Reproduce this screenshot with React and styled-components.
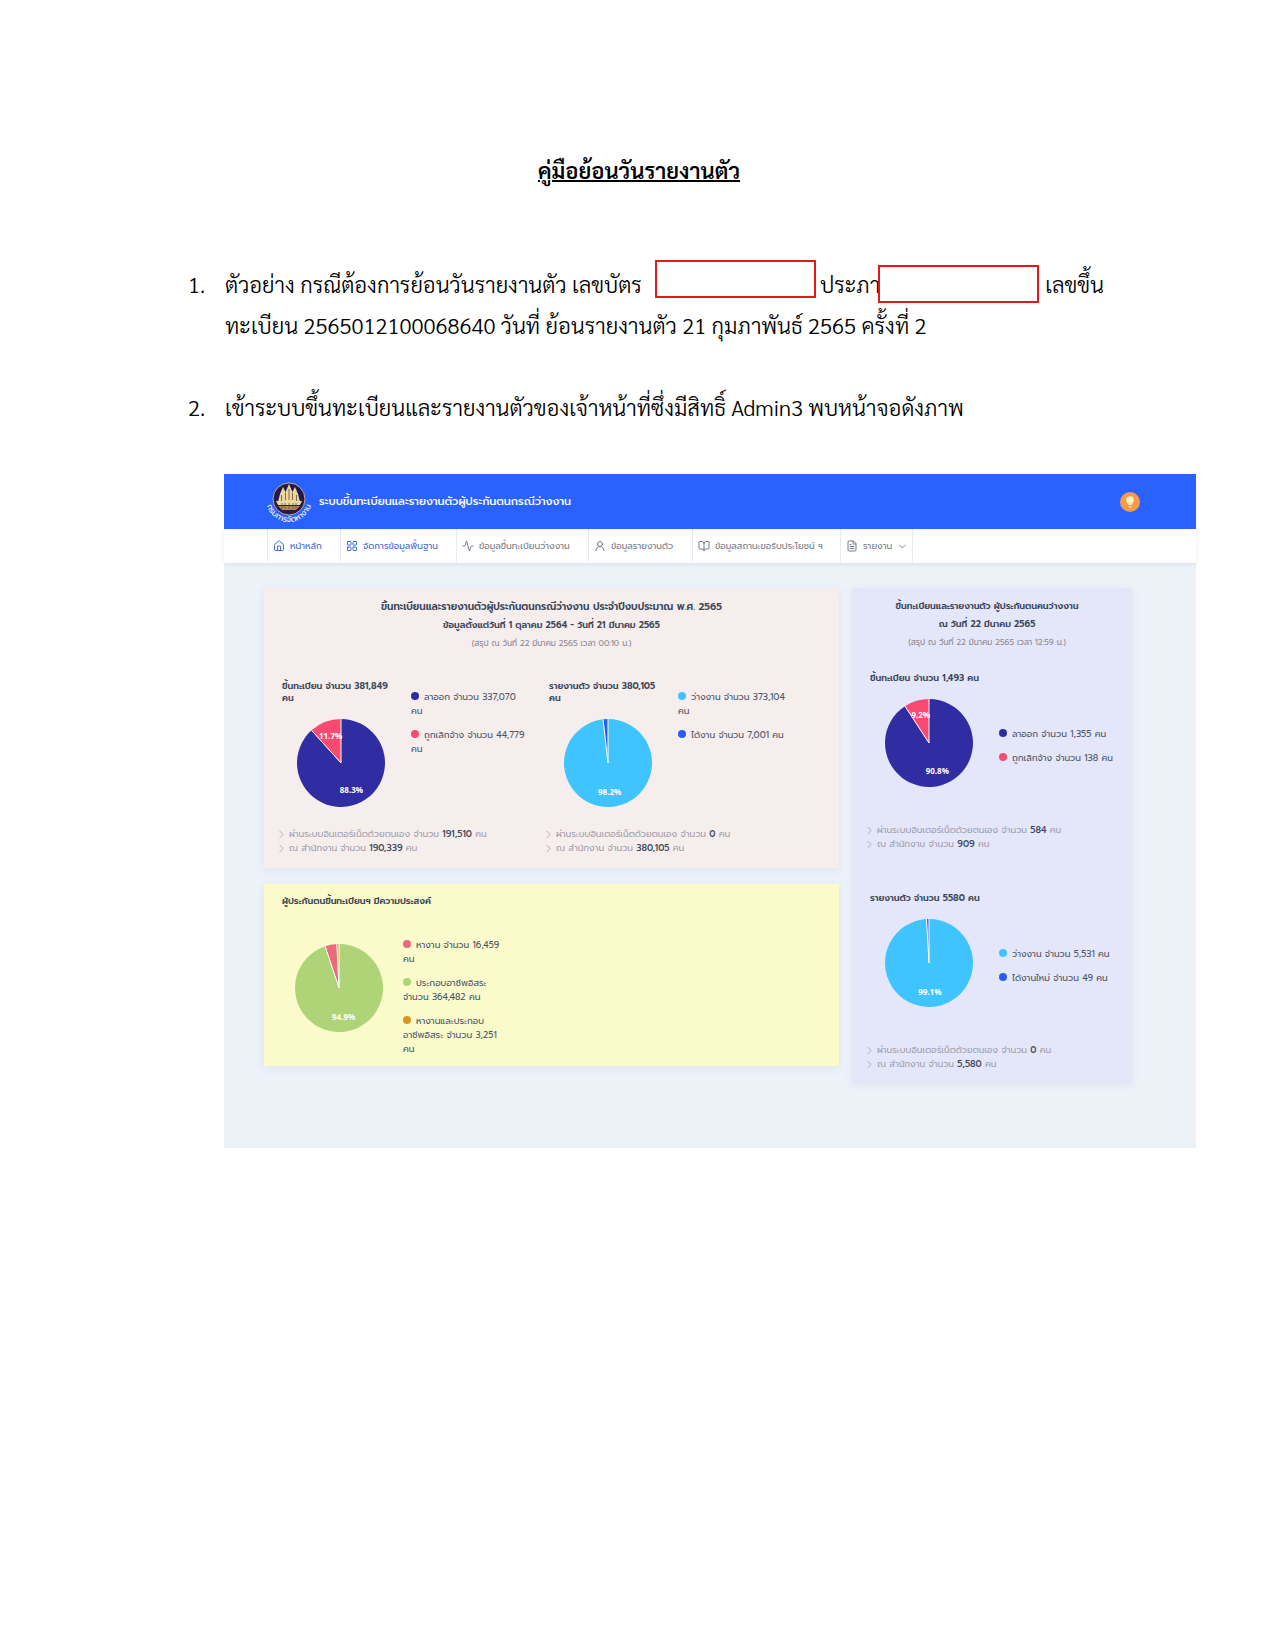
import React from "react";
import styled, { createGlobalStyle } from "styled-components";
import {
  Activity,
  BookOpen,
  ChevronDown,
  ChevronRight,
  FileText,
  House,
  LayoutGrid,
  UserRound,
} from "lucide-react";

const Colours = {
  blue: "#2962ff",
  navy: "#302da3",
  pink: "#f94a72",
  sky: "#40c4ff",
  royal: "#2b5cf0",
  green: "#aed477",
  rose: "#ea6b7b",
  orange: "#d9951f",
  heading: "#3a4759",
  text: "#4c5566",
  muted: "#a09fac",
};

const GlobalStyle = createGlobalStyle`
  * {
    box-sizing: border-box;
  }
  body {
    margin: 0;
    background: white;
  }
`;

const Page = styled.main`
  padding: 148px 79px 120px 188px;
  font-family: "TH Sarabun New", "Sarabun", "Noto Sans Thai Looped", "Loma",
    "Noto Sans", sans-serif;
  color: black;
`;

const Title = styled.h1`
  margin: 0 106px 72px 0;
  padding: 0;
  font-size: 22px;
  font-weight: 600;
  line-height: 44px;
  text-align: center;
  text-decoration: underline;
  text-decoration-thickness: 2px;
`;

const Steps = styled.ol`
  margin: 0 0 46px;
  padding: 0;
  list-style: none;
  counter-reset: step;
`;

const Step = styled.li`
  counter-increment: step;
  display: flex;
  font-size: 22px;
  font-weight: 300;
  line-height: 41px;
  white-space: nowrap;

  &::before {
    content: counter(step) ".";
    flex: 0 0 37px;
  }

  & + & {
    margin-top: 41px;
  }
`;

const StepText = styled.p`
  margin: 0;
`;

const StepLine = styled.span`
  display: flex;
  height: 41px;
`;

const Redacted = styled.span`
  position: relative;
  flex: 0 0 161px;
  height: 38px;
  margin: ${(props) => props.$margin};
  border: 2px solid #e3191b;
  background: white;
`;

const Screen = styled.section`
  margin-left: 36px;
  background: #edf2f9;
  color: ${Colours.text};
  font-family: "Prompt", "Noto Sans Thai", "Noto Sans", sans-serif;
  font-size: 9px;
  line-height: 14px;
`;

const TopBar = styled.header`
  display: flex;
  align-items: center;
  justify-content: space-between;
  height: 55px;
  padding: 0 56px 0 40px;
  background: ${Colours.blue};
  color: white;
`;

const Brand = styled.div`
  display: flex;
  align-items: center;
  gap: 5px;
  font-size: 11px;
  font-weight: 500;
`;

const TipButton = styled.button`
  width: 20px;
  height: 20px;
  padding: 0;
  border: 0;
  background: none;
`;

const Nav = styled.nav`
  display: flex;
  height: 34px;
  padding-left: 43px;
  background: white;
  box-shadow: 0 1px 4px rgba(60, 80, 110, 0.12);
`;

const NavLink = styled.a`
  display: flex;
  align-items: center;
  gap: 5px;
  width: ${(props) => props.$width}px;
  padding-left: 5px;
  border-left: 1px solid #e8ebf0;
  color: ${(props) => (props.$active ? "#3f68d8" : "#777b89")};
  text-decoration: none;
  white-space: nowrap;

  &:last-child {
    border-right: 1px solid #e8ebf0;
  }
`;

const Board = styled.div`
  display: grid;
  grid-template-columns: 575fr 280fr;
  gap: 13px;
  align-items: start;
  padding: 25px 64px 65px 40px;
`;

const Column = styled.div`
  display: grid;
  gap: 16px;
`;

const Card = styled.article`
  min-height: ${(props) => props.$height}px;
  padding: ${(props) => props.$padding};
  background: ${(props) => props.$background};
  box-shadow: 0 2px 8px rgba(90, 110, 150, 0.1);
`;

const CardHeading = styled.div`
  height: ${(props) => props.$height}px;
  padding-right: ${(props) => props.$inset || 0}px;
  color: ${Colours.heading};
  line-height: 18px;
  text-align: center;
`;

const Heading = styled.h2`
  margin: 0;
  font-size: ${(props) => (props.$large ? 10 : 9)}px;
  font-weight: 600;
`;

const Note = styled.p`
  margin: 0;
  color: #8b8793;
  font-size: 8px;
`;

const Pair = styled.div`
  display: grid;
  grid-template-columns: 267fr 280fr;
`;

const ChartRow = styled.div`
  display: flex;
  align-items: ${(props) => props.$align || "flex-start"};
`;

const ChartTitle = styled.h3`
  margin: 0 0 ${(props) => props.$gap || 0}px 4px;
  color: ${Colours.heading};
  font-size: 9px;
  font-weight: 600;
  line-height: 12px;
`;

const ChartColumn = styled.div`
  flex: none;
  width: 133px;
  padding-right: 20px;
`;

const Pie = styled.svg`
  display: block;
  flex: none;
  width: 88px;
  height: 88px;
  margin: ${(props) => props.$margin};
`;

const PieLabel = styled.text`
  fill: white;
  font: bold 8px "Open Sans", sans-serif;
  text-anchor: middle;
`;

const Legend = styled.ul`
  width: ${(props) => props.$width}px;
  margin: ${(props) => props.$margin || 0};
  padding: 0;
  list-style: none;
`;

const LegendItem = styled.li`
  line-height: 14px;

  & + & {
    margin-top: 10px;
  }

  &::before {
    content: "";
    display: inline-block;
    width: 8px;
    height: 8px;
    margin-right: 5px;
    border-radius: 50%;
    background: ${(props) => props.$color};
  }
`;

const Channels = styled.ul`
  margin: ${(props) => props.$margin};
  padding: 0;
  list-style: none;
  color: ${Colours.muted};
  white-space: nowrap;

  li {
    display: flex;
    align-items: center;
    gap: 1px;
  }

  svg {
    margin-left: -3px;
  }

  b {
    color: ${Colours.heading};
    font-weight: 500;
  }
`;

const point = (share, radius) => {
  const angle = share * 2 * Math.PI;
  return [44 + radius * Math.sin(angle), 44 - radius * Math.cos(angle)];
};

const PieChart = ({ slices, margin }) => {
  let start = 0;
  const parts = slices.map(([value, color, hasLabel]) => {
    const from = start;
    start += value / 100;
    return { value, color, hasLabel, from, to: start };
  });

  return (
    <Pie viewBox="0 0 88 88" $margin={margin}>
      {parts.map(({ value, color, from, to }) => (
        <path
          key={color}
          d={`M44 44L${point(from, 44)}A44 44 0 ${value > 50 ? 1 : 0} 1 ${point(to, 44)}Z`}
          fill={color}
        />
      ))}
      {parts.map(({ color, from }) => {
        const [x, y] = point(from, 44);
        return <path key={color} d={`M44 44L${x} ${y}`} stroke="white" />;
      })}
      {parts
        .filter((part) => part.hasLabel)
        .map(({ value, color, from, to }) => {
          const [x, y] = point((from + to) / 2, 29);
          return (
            <PieLabel key={color} x={x} y={y + 3}>
              {value}%
            </PieLabel>
          );
        })}
    </Pie>
  );
};

const ChannelList = ({ online, office, margin }) => (
  <Channels $margin={margin}>
    <li>
      <ChevronRight size={13} strokeWidth={1.5} />
      <span>
        ผ่านระบบอินเตอร์เน็ตด้วยตนเอง จำนวน <b>{online}</b> คน
      </span>
    </li>
    <li>
      <ChevronRight size={13} strokeWidth={1.5} />
      <span>
        ณ สำนักงาน จำนวน <b>{office}</b> คน
      </span>
    </li>
  </Channels>
);

const Logo = () => (
  <svg width="50" height="50" viewBox="0 0 50 50" overflow="visible">
    <circle cx="25" cy="22" r="16" fill="#211b4b" stroke="#c8a78e" />
    <g fill="#ecd79f">
      <path d="M25 7l-3 7-1 10h8l-1-10z" />
      <path d="M19 10l-3 7-2 8h8v-9z" />
      <path d="M31 10l3 7 2 8h-8v-9z" />
      <path d="M12 24h26l-2 4H14z" />
      <path d="M14 29h22l-4 4H18z" fill="#b48a4d" />
    </g>
    <path
      d="M21.500 16v7M25 12v11M28.500 16v7M17.500 18v6M32.500 18v6M18 26v6M21 26v6M25 26v6M29 26v6M32 26v6"
      stroke="#6b4c35"
      strokeWidth="0.800"
    />
    <path id="logo-arc" d="M2 22A23 23 0 0 0 48 22" fill="none" />
    <text fill="white" fontSize="8" fontWeight="400">
      <textPath href="#logo-arc" startOffset="50%" textAnchor="middle">
        กรมการจัดหางาน
      </textPath>
    </text>
  </svg>
);

const Bulb = () => (
  <svg width="20" height="20" viewBox="0 0 20 20">
    <circle cx="10" cy="10" r="10" fill="#f79a4b" />
    <path
      d="M10 4a4 4 0 0 0-2.600 7c.6.600.8 1.200.8 2h3.600c0-.8.200-1.400.8-2A4 4 0 0 0 10 4z"
      fill="#fff0b8"
    />
    <path d="M8.500 14h3v1.500h-3z" fill="#ffd98a" />
  </svg>
);

const navItems = [
  { Icon: House, label: "หน้าหลัก", width: 73, active: true },
  { Icon: LayoutGrid, label: "จัดการข้อมูลพื้นฐาน", width: 116, active: true },
  { Icon: Activity, label: "ข้อมูลขึ้นทะเบียนว่างงาน", width: 132 },
  { Icon: UserRound, label: "ข้อมูลรายงานตัว", width: 104 },
  { Icon: BookOpen, label: "ข้อมูลสถานะขอรับประโยชน์ ฯ", width: 148 },
  { Icon: FileText, label: "รายงาน", width: 73, hasMenu: true },
];

const App = () => (
  <>
    <GlobalStyle />
    <Page>
      <Title>คู่มือย้อนวันรายงานตัว</Title>
      <Steps>
        <Step>
          <StepText>
            <StepLine>
              ตัวอย่าง กรณีต้องการย้อนวันรายงานตัว เลขบัตร
              <Redacted $margin="-4px 4px 0 13px" />
              ประภา
              <Redacted $margin="1px 6px 0 -2px" />
              เลขขึ้น
            </StepLine>
            ทะเบียน 2565012100068640 วันที่ ย้อนรายงานตัว 21 กุมภาพันธ์ 2565
            ครั้งที่ 2
          </StepText>
        </Step>
        <Step>
          <StepText>
            เข้าระบบขึ้นทะเบียนและรายงานตัวของเจ้าหน้าที่ซึ่งมีสิทธิ์ Admin3
            พบหน้าจอดังภาพ
          </StepText>
        </Step>
      </Steps>

      <Screen>
        <TopBar>
          <Brand>
            <Logo />
            ระบบขึ้นทะเบียนและรายงานตัวผู้ประกันตนกรณีว่างงาน
          </Brand>
          <TipButton aria-label="คำแนะนำ">
            <Bulb />
          </TipButton>
        </TopBar>
        <Nav>
          {navItems.map(({ Icon, label, width, active, hasMenu }) => (
            <NavLink key={label} href="#" $width={width} $active={active}>
              <Icon size={12} strokeWidth={2} />
              {label}
              {hasMenu ? <ChevronDown size={11} strokeWidth={2} /> : null}
            </NavLink>
          ))}
        </Nav>

        <Board>
          <Column>
            <Card $background="#f6eded" $height={280} $padding="10px 14px">
              <CardHeading $height={82}>
                <Heading $large>
                  ขึ้นทะเบียนและรายงานตัวผู้ประกันตนกรณีว่างงาน
                  ประจำปีงบประมาณ พ.ศ. 2565
                </Heading>
                <Heading>
                  ข้อมูลตั้งแต่วันที่ 1 ตุลาคม 2564 - วันที่ 21 มีนาคม 2565
                </Heading>
                <Note>(สรุป ณ วันที่ 22 มีนาคม 2565 เวลา 00:10 น.)</Note>
              </CardHeading>
              <Pair>
                <div>
                  <ChartRow>
                    <ChartColumn>
                      <ChartTitle $gap={15}>
                        ขึ้นทะเบียน จำนวน 381,849 คน
                      </ChartTitle>
                      <PieChart
                        margin="0 0 0 19px"
                        slices={[
                          [88.3, Colours.navy, true],
                          [11.7, Colours.pink, true],
                        ]}
                      />
                    </ChartColumn>
                    <Legend $width={116} $margin="10px 0 0">
                      <LegendItem $color={Colours.navy}>
                        ลาออก จำนวน 337,070 คน
                      </LegendItem>
                      <LegendItem $color={Colours.pink}>
                        ถูกเลิกจ้าง จำนวน 44,779 คน
                      </LegendItem>
                    </Legend>
                  </ChartRow>
                  <ChannelList
                    online="191,510"
                    office="190,339"
                    margin="20px 0 0"
                  />
                </div>
                <div>
                  <ChartRow>
                    <ChartColumn>
                      <ChartTitle $gap={15}>
                        รายงานตัว จำนวน 380,105 คน
                      </ChartTitle>
                      <PieChart
                        margin="0 0 0 19px"
                        slices={[
                          [98.2, Colours.sky, true],
                          [1.8, Colours.royal],
                        ]}
                      />
                    </ChartColumn>
                    <Legend $width={116} $margin="10px 0 0">
                      <LegendItem $color={Colours.sky}>
                        ว่างงาน จำนวน 373,104 คน
                      </LegendItem>
                      <LegendItem $color={Colours.royal}>
                        ได้งาน จำนวน 7,001 คน
                      </LegendItem>
                    </Legend>
                  </ChartRow>
                  <ChannelList
                    online="0"
                    office="380,105"
                    margin="20px 0 0"
                  />
                </div>
              </Pair>
            </Card>

            <Card $background="#fafacb" $height={182} $padding="11px 14px 0">
              <ChartTitle $gap={31}>
                ผู้ประกันตนขึ้นทะเบียนฯ มีความประสงค์
              </ChartTitle>
              <ChartRow>
                <PieChart
                  margin="6px 20px 0 17px"
                  slices={[
                    [94.9, Colours.green, true],
                    [4.3, Colours.rose],
                    [0.8, Colours.orange],
                  ]}
                />
                <Legend $width={99}>
                  <LegendItem $color={Colours.rose}>
                    หางาน จำนวน 16,459 คน
                  </LegendItem>
                  <LegendItem $color={Colours.green}>
                    ประกอบอาชีพอิสระ จำนวน 364,482 คน
                  </LegendItem>
                  <LegendItem $color={Colours.orange}>
                    หางานและประกอบอาชีพอิสระ จำนวน 3,251 คน
                  </LegendItem>
                </Legend>
              </ChartRow>
            </Card>
          </Column>

          <Card $background="#e4e6fa" $height={495} $padding="9px 14px">
            <CardHeading $height={75} $inset={10}>
              <Heading>ขึ้นทะเบียนและรายงานตัว ผู้ประกันตนคนว่างงาน</Heading>
              <Heading>ณ วันที่ 22 มีนาคม 2565</Heading>
              <Note>(สรุป ณ วันที่ 22 มีนาคม 2565 เวลา 12:59 น.)</Note>
            </CardHeading>
            <ChartTitle $gap={15}>ขึ้นทะเบียน จำนวน 1,493 คน</ChartTitle>
            <ChartRow $align="center">
              <PieChart
                margin="0 26px 0 19px"
                slices={[
                  [90.8, Colours.navy, true],
                  [9.2, Colours.pink, true],
                ]}
              />
              <Legend $margin="5px 0 0">
                <LegendItem $color={Colours.navy}>
                  ลาออก จำนวน 1,355 คน
                </LegendItem>
                <LegendItem $color={Colours.pink}>
                  ถูกเลิกจ้าง จำนวน 138 คน
                </LegendItem>
              </Legend>
            </ChartRow>
            <ChannelList online="584" office="909" margin="36px 0 41px" />
            <ChartTitle $gap={15}>รายงานตัว จำนวน 5580 คน</ChartTitle>
            <ChartRow $align="center">
              <PieChart
                margin="0 26px 0 19px"
                slices={[
                  [99.1, Colours.sky, true],
                  [0.9, Colours.royal],
                ]}
              />
              <Legend $margin="5px 0 0">
                <LegendItem $color={Colours.sky}>
                  ว่างงาน จำนวน 5,531 คน
                </LegendItem>
                <LegendItem $color={Colours.royal}>
                  ได้งานใหม่ จำนวน 49 คน
                </LegendItem>
              </Legend>
            </ChartRow>
            <ChannelList online="0" office="5,580" margin="36px 0 0" />
          </Card>
        </Board>
      </Screen>
    </Page>
  </>
);

export default App;
